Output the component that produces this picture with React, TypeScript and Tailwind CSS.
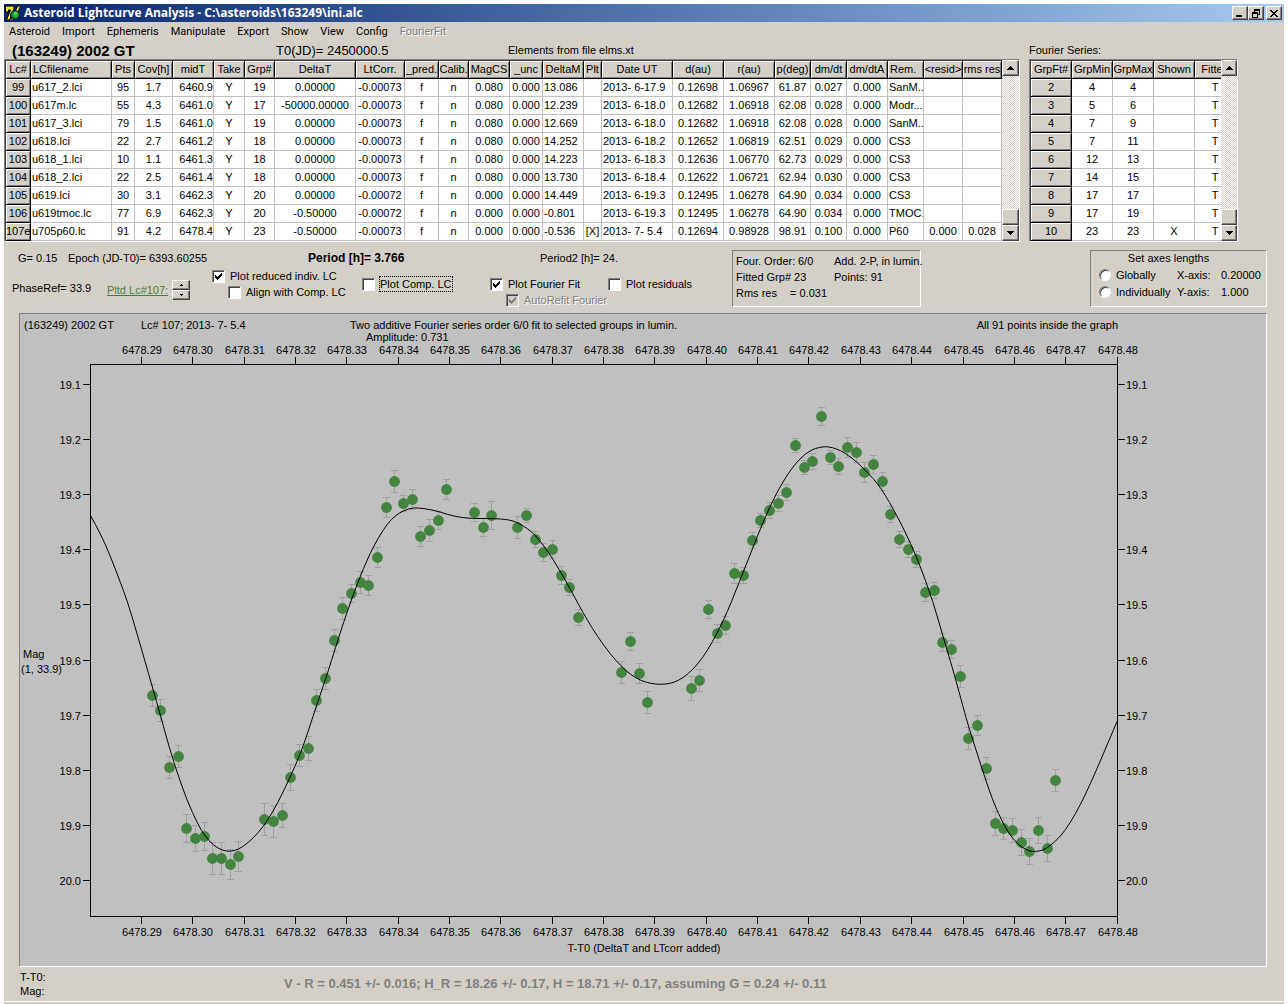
import React from 'react';
import clsx from 'clsx';

type Align = 'left' | 'center' | 'right';

interface Column {
    title: string;
    width: number;
    align?: Align;
}

const RAISED = 'border border-t-white border-l-white border-r-[#404040] border-b-[#404040] shadow-[inset_-1px_-1px_0_#808080]';
const SUNKEN = 'border border-t-[#808080] border-l-[#808080] border-r-white border-b-white';

const menuItems = ['Asteroid', 'Import', 'Ephemeris', 'Manipulate', 'Export', 'Show', 'View', 'Config'];

const lcColumns: Column[] = [
    { title: 'Lc#', width: 25 },
    { title: 'LCfilename', width: 81, align: 'left' },
    { title: 'Pts', width: 23 },
    { title: 'Cov[h]', width: 38 },
    { title: 'midT', width: 41, align: 'right' },
    { title: 'Take', width: 31 },
    { title: 'Grp#', width: 30 },
    { title: 'DeltaT', width: 81 },
    { title: 'LtCorr.', width: 49 },
    { title: '_pred.', width: 34 },
    { title: 'Calib.', width: 30 },
    { title: 'MagCS', width: 41 },
    { title: '_unc', width: 33 },
    { title: 'DeltaM', width: 41, align: 'left' },
    { title: 'Plt', width: 18 },
    { title: 'Date UT', width: 71, align: 'left' },
    { title: 'd(au)', width: 51 },
    { title: 'r(au)', width: 51 },
    { title: 'p(deg)', width: 36 },
    { title: 'dm/dt', width: 36 },
    { title: 'dm/dtA', width: 41 },
    { title: 'Rem.', width: 36, align: 'left' },
    { title: '<resid>', width: 39 },
    { title: 'rms res', width: 39 },
];

const lcRows: string[][] = [
    ['99', 'u617_2.lci', '95', '1.7', '6460.9', 'Y', '19', '0.00000', '-0.00073', 'f', 'n', '0.080', '0.000', '13.086', '', '2013- 6-17.9', '0.12698', '1.06967', '61.87', '0.027', '0.000', 'SanM..', '', ''],
    ['100', 'u617m.lc', '55', '4.3', '6461.0', 'Y', '17', '-50000.00000', '-0.00073', 'f', 'n', '0.080', '0.000', '12.239', '', '2013- 6-18.0', '0.12682', '1.06918', '62.08', '0.028', '0.000', 'Modr...', '', ''],
    ['101', 'u617_3.lci', '79', '1.5', '6461.0', 'Y', '19', '0.00000', '-0.00073', 'f', 'n', '0.080', '0.000', '12.669', '', '2013- 6-18.0', '0.12682', '1.06918', '62.08', '0.028', '0.000', 'SanM..', '', ''],
    ['102', 'u618.lci', '22', '2.7', '6461.2', 'Y', '18', '0.00000', '-0.00073', 'f', 'n', '0.080', '0.000', '14.252', '', '2013- 6-18.2', '0.12652', '1.06819', '62.51', '0.029', '0.000', 'CS3', '', ''],
    ['103', 'u618_1.lci', '10', '1.1', '6461.3', 'Y', '18', '0.00000', '-0.00073', 'f', 'n', '0.080', '0.000', '14.223', '', '2013- 6-18.3', '0.12636', '1.06770', '62.73', '0.029', '0.000', 'CS3', '', ''],
    ['104', 'u618_2.lci', '22', '2.5', '6461.4', 'Y', '18', '0.00000', '-0.00073', 'f', 'n', '0.080', '0.000', '13.730', '', '2013- 6-18.4', '0.12622', '1.06721', '62.94', '0.030', '0.000', 'CS3', '', ''],
    ['105', 'u619.lci', '30', '3.1', '6462.3', 'Y', '20', '0.00000', '-0.00072', 'f', 'n', '0.000', '0.000', '14.449', '', '2013- 6-19.3', '0.12495', '1.06278', '64.90', '0.034', '0.000', 'CS3', '', ''],
    ['106', 'u619tmoc.lc', '77', '6.9', '6462.3', 'Y', '20', '-0.50000', '-0.00072', 'f', 'n', '0.000', '0.000', '-0.801', '', '2013- 6-19.3', '0.12495', '1.06278', '64.90', '0.034', '0.000', 'TMOC.', '', ''],
    ['107e', 'u705p60.lc', '91', '4.2', '6478.4', 'Y', '23', '-0.50000', '-0.00073', 'f', 'n', '0.000', '0.000', '-0.536', '[X]', '2013- 7- 5.4', '0.12694', '0.98928', '98.91', '0.100', '0.000', 'P60', '0.000', '0.028'],
];

const fourierColumns: Column[] = [
    { title: 'GrpFt#', width: 41 },
    { title: 'GrpMin', width: 41 },
    { title: 'GrpMax', width: 41 },
    { title: 'Shown', width: 41 },
    { title: 'Fitted', width: 41 },
];

const fourierRows: string[][] = [
    ['2', '4', '4', '', 'T'],
    ['3', '5', '6', '', 'T'],
    ['4', '7', '9', '', 'T'],
    ['5', '7', '11', '', 'T'],
    ['6', '12', '13', '', 'T'],
    ['7', '14', '15', '', 'T'],
    ['8', '17', '17', '', 'T'],
    ['9', '17', '19', '', 'T'],
    ['10', '23', '23', 'X', 'T'],
];

// [x, y, half length of the error bar]
const points: [number, number, number][] = [
    [152, 695, 11], [160, 710, 11], [169, 767, 11], [178, 756, 11], [186, 828, 14], [195, 838, 13], [204, 836, 14],
    [212, 858, 16], [221, 858, 16], [230, 864, 15], [238, 856, 15], [264, 819, 16], [273, 821, 16], [282, 815, 12],
    [290, 777, 13], [299, 755, 11], [308, 748, 12], [316, 700, 11], [325, 678, 11], [334, 640, 11], [342, 608, 11],
    [351, 593, 9], [360, 582, 11], [368, 585, 10], [377, 557, 10], [386, 507, 10], [394, 481, 11], [403, 503, 8],
    [412, 499, 10], [420, 536, 10], [429, 530, 11], [438, 520, 9], [446, 489, 10], [474, 512, 9], [483, 527, 9],
    [491, 515, 14], [517, 527, 11], [526, 515, 7], [535, 539, 8], [543, 552, 9], [552, 549, 9], [561, 575, 9],
    [569, 587, 8], [578, 617, 8], [621, 672, 11], [630, 641, 9], [639, 673, 10], [647, 702, 11], [691, 688, 12],
    [699, 680, 11], [708, 609, 9], [717, 633, 9], [725, 625, 9], [734, 573, 10], [743, 575, 8], [752, 540, 8],
    [760, 520, 7], [769, 510, 8], [778, 503, 8], [786, 492, 8], [795, 445, 7], [804, 467, 7], [812, 461, 8],
    [821, 416, 9], [830, 457, 7], [838, 466, 8], [847, 447, 10], [856, 452, 10], [864, 472, 10], [873, 464, 9],
    [882, 481, 9], [890, 514, 8], [899, 539, 8], [908, 549, 8], [916, 559, 8], [925, 592, 9], [934, 590, 8],
    [942, 642, 9], [951, 649, 9], [960, 676, 11], [968, 738, 11], [977, 725, 10], [986, 768, 11], [995, 823, 12],
    [1003, 828, 11], [1012, 830, 12], [1021, 842, 13], [1029, 851, 13], [1038, 830, 13], [1047, 848, 13], [1055, 780, 11],
];

const fit: [number, number][] = [
    [90, 515], [100, 533], [110, 556], [118, 577], [127, 601], [135, 628], [144, 659], [152, 687], [160, 715], [169, 748],
    [178, 776], [187, 801], [197, 823], [204, 835], [213, 845], [222, 850], [230, 851], [238, 849], [248, 842], [258, 832],
    [267, 820], [277, 803], [290, 776], [300, 753], [308, 730], [317, 702], [327, 673], [335, 647], [343, 622], [351, 599],
    [357, 583], [363, 568], [370, 552], [378, 537], [387, 523], [395, 515], [403, 510], [413, 507], [423, 508], [435, 510],
    [447, 514], [460, 517], [473, 518], [492, 518], [508, 519], [517, 522], [527, 528], [535, 535], [543, 545], [552, 558],
    [561, 573], [570, 589], [578, 604], [587, 620], [597, 636], [610, 654], [622, 667], [630, 674], [640, 680], [650, 683],
    [660, 684], [670, 683], [678, 680], [687, 674], [697, 664], [707, 650], [717, 632], [727, 611], [735, 591], [743, 571],
    [752, 548], [760, 528], [769, 507], [778, 489], [787, 474], [795, 463], [804, 454], [812, 449], [818, 447], [825, 446],
    [832, 447], [840, 450], [848, 455], [857, 462], [868, 473], [877, 483], [885, 495], [893, 509], [902, 526], [910, 543],
    [917, 559], [925, 580], [932, 600], [940, 627], [949, 658], [953, 671], [963, 708], [968, 726], [977, 754], [985, 779],
    [993, 802], [1003, 824], [1012, 838], [1021, 847], [1030, 851], [1035, 851], [1042, 850], [1050, 845], [1060, 836],
    [1070, 822], [1080, 804], [1090, 783], [1100, 760], [1108, 741], [1117, 720],
];

// quadratic segments through the midpoints keep the curve smooth
const fitPath = () => {
    let d = `M${fit[0][0]} ${fit[0][1]}`;
    for (let i = 1; i < fit.length - 1; i++) {
        const [x, y] = fit[i];
        const [nx, ny] = fit[i + 1];
        d += ` Q${x} ${y} ${(x + nx) / 2} ${(y + ny) / 2}`;
    }
    const [lx, ly] = fit[fit.length - 1];
    return `${d} L${lx} ${ly}`;
};

const xTicks = Array.from({ length: 20 }, (_, i) => ({
    pos: Math.floor(90.06 + 51.35 * (i + 1)),
    label: (6478.29 + i * 0.01).toFixed(2),
}));

const yTicks = Array.from({ length: 10 }, (_, i) => ({
    pos: Math.floor(384.3 + 55.15 * i),
    label: (19.1 + i * 0.1).toFixed(1),
}));

const Logo = () => (
    <svg width="18" height="18" viewBox="0 0 18 18" aria-hidden="true">
        <path d="M1.500 2H10v3L5.500 16H2.500L6.500 6H4.500v2h-3z" fill="#f5e418" stroke="#000" />
        <path d="M10 9l4-7h2.500l-3 7z" fill="#f5e418" stroke="#000" strokeWidth=".8" />
        <circle cx="11" cy="11" r="4.500" fill="#0c6b5c" stroke="#000" strokeWidth=".8" />
        <circle cx="11.500" cy="10.500" r="3" fill="#27b324" />
        <path d="M10.500 8.500h2v2h-2z" fill="#7ee26b" />
        <path d="M6 15l3 1" stroke="#d93a2b" />
    </svg>
);

const TitleButton = ({ label, children }: { label: string; children: React.ReactNode }) => (
    <button type="button" aria-label={label} className={clsx('flex h-[14px] w-4 items-center justify-center bg-[#d4d0c8]', RAISED)}>
        <svg width="10" height="9" viewBox="0 0 10 9" shapeRendering="crispEdges" fill="#000">{children}</svg>
    </button>
);

const TitleBar = () => (
    <header className="flex h-[18px] items-center bg-linear-to-r from-[#0a246a] to-[#a6caf0] pr-[2px]">
        <Logo />
        <h1 className="ml-[2px] flex-1 font-[Open_Sans,sans-serif] text-xs leading-[18px] font-bold text-white">
            Asteroid Lightcurve Analysis - C:\asteroids\163249\ini.alc
        </h1>
        <TitleButton label="Minimize"><path d="M1 6h6v2H1z" /></TitleButton>
        <TitleButton label="Restore"><path d="M3 0h6v6H7V5h1V2H4v1H3zM1 3h6v6H1zM2 5v3h4V5z" fillRule="evenodd" /></TitleButton>
        <span className="w-[2px]" />
        <TitleButton label="Close"><path d="M1 1h2v1h1v1h2V2h1V1h2v1H8v1H7v1H6v1h1v1h1v1h1v1H7V7H6V6H4v1H3v1H1V7h1V6h1V5h1V4H3V3H2V2H1z" /></TitleButton>
    </header>
);

const ScrollBar = ({ width }: { width: number }) => (
    <div className="flex flex-col bg-[conic-gradient(#fff_25%,#d4d0c8_0_50%,#fff_0_75%,#d4d0c8_0)] bg-[length:2px_2px]" style={{ width }}>
        <button type="button" aria-label="Scroll up" className={clsx('flex h-4 items-center justify-center bg-[#d4d0c8]', RAISED)}>
            <svg width="7" height="4" viewBox="0 0 7 4" shapeRendering="crispEdges"><path d="M3 0h1v1h1v1h1v1h1v1H0V3h1V2h1V1h1z" /></svg>
        </button>
        <div className="flex-1" />
        <div className={clsx('h-4 bg-[#d4d0c8]', RAISED)} />
        <button type="button" aria-label="Scroll down" className={clsx('flex h-4 items-center justify-center bg-[#d4d0c8]', RAISED)}>
            <svg width="7" height="4" viewBox="0 0 7 4" shapeRendering="crispEdges"><path d="M0 0h7v1H6v1H5v1H4v1H3V3H2V2H1V1H0z" /></svg>
        </button>
    </div>
);

const DataGrid = ({ columns, rows, label }: { columns: Column[]; rows: string[][]; label: string }) => {
    const total = columns.reduce((sum, col) => sum + col.width, 0);
    const fixed = 'overflow-hidden border-r border-b border-black bg-[#d4d0c8] p-0 font-normal whitespace-nowrap shadow-[inset_1px_1px_0_#fff,inset_-1px_-1px_0_#808080]';

    return (
        <table aria-label={label} className="table-fixed border-separate border-spacing-0 bg-white leading-[17px]" style={{ width: total }}>
            <colgroup>
                {columns.map(col => <col key={col.title} style={{ width: col.width }} />)}
            </colgroup>
            <thead>
                <tr className="h-[18px]">
                    {columns.map(col => (
                        <th key={col.title} scope="col" className={clsx(fixed, col.title === 'LCfilename' || col.title === 'Rem.' ? 'pl-[2px] text-left' : 'text-center')}>
                            {col.title}
                        </th>
                    ))}
                </tr>
            </thead>
            <tbody>
                {rows.map(row => (
                    <tr key={row[0]} className="h-[18px]">
                        {row.map((cell, i) => i === 0 ? (
                            <th key={i} scope="row" className={clsx(fixed, 'text-center')}>{cell}</th>
                        ) : (
                            <td
                                key={i}
                                className={clsx(
                                    'overflow-hidden border-r border-b border-[#c0c0c0] whitespace-nowrap',
                                    columns[i].align === 'left' && 'pl-px text-left',
                                    columns[i].align === 'right' && 'text-right',
                                    !columns[i].align && 'text-center',
                                )}
                            >
                                {cell}
                            </td>
                        ))}
                    </tr>
                ))}
            </tbody>
        </table>
    );
};

interface CheckProps {
    label: string;
    checked?: boolean;
    disabled?: boolean;
    focused?: boolean;
}

const Check = ({ label, checked, disabled, focused }: CheckProps) => (
    <label className="flex h-4 items-center gap-[5px] whitespace-nowrap">
        <span className="grid shrink-0 items-center justify-items-center">
            <input
                type="checkbox"
                defaultChecked={checked}
                disabled={disabled}
                className={clsx('peer col-start-1 row-start-1 size-[13px] appearance-none shadow-[inset_1px_1px_0_#404040]', SUNKEN, disabled ? 'bg-[#d4d0c8]' : 'bg-white')}
            />
            <svg width="7" height="7" viewBox="0 0 7 7" shapeRendering="crispEdges" className="invisible col-start-1 row-start-1 peer-checked:visible" fill={disabled ? '#808080' : '#000'}>
                <path d="M0 2h1v1h1v1h1V3h1V2h1V1h1V0h1v3H6v1H5v1H4v1H3v1H2V6H1V5H0z" />
            </svg>
        </span>
        <span className={clsx('leading-[14px]', focused && 'outline-1 outline-dotted outline-black', disabled && 'text-[#808080] [text-shadow:1px_1px_0_#fff]')}>
            {label}
        </span>
    </label>
);

const Toolbar = () => (
    <section className="flex h-[71px] pt-2 leading-4">
        <div className="w-[728px] shrink-0">
            <div className="flex pl-[14px]">
                <span className="w-[50px]">G= 0.15</span>
                <span className="w-[240px]">Epoch (JD-T0)= 6393.60255</span>
                <b className="w-[232px] text-xs leading-4">Period [h]= 3.766</b>
                <span>Period2 [h]= 24.</span>
            </div>
            <div className="flex pt-[2px]">
                <div className="flex w-[208px] items-center gap-[3px] pl-2">
                    <span className="w-[92px]">PhaseRef= 33.9</span>
                    <a href="#lc107" className="w-[62px] pt-1 whitespace-nowrap text-[#44803c] underline">Pltd Lc#107:</a>
                    <span className="flex flex-col pt-1">
                        <button type="button" aria-label="Next lightcurve" className={clsx('flex h-[10px] w-[18px] items-center justify-center', RAISED)}>
                            <svg width="3" height="2" shapeRendering="crispEdges"><path d="M1 0h1v1h1v1H0V1h1z" /></svg>
                        </button>
                        <button type="button" aria-label="Previous lightcurve" className={clsx('flex h-[10px] w-[18px] items-center justify-center', RAISED)}>
                            <svg width="3" height="2" shapeRendering="crispEdges"><path d="M0 0h3v1H2v1H1V1H0z" /></svg>
                        </button>
                    </span>
                </div>
                <div className="w-[150px]">
                    <Check label="Plot reduced indiv. LC" checked />
                    <div className="pl-4"><Check label="Align with Comp. LC" /></div>
                </div>
                <div className="w-[128px] pt-2">
                    <Check label="Plot Comp. LC" focused />
                </div>
                <div className="w-[118px] pt-2">
                    <Check label="Plot Fourier Fit" checked />
                    <div className="pl-4"><Check label="AutoRefit Fourier" checked disabled /></div>
                </div>
                <div className="pt-2">
                    <Check label="Plot residuals" />
                </div>
            </div>
        </div>

        <dl className={clsx('grid h-[57px] w-[189px] shrink-0 grid-cols-[62px_36px_auto] content-start pt-[2px] pl-[3px] whitespace-nowrap', SUNKEN)}>
            <dt>Four. Order:</dt><dd>6/0</dd><dd>Add. 2-P, in lumin.</dd>
            <dt className="col-span-2">Fitted Grp# 23</dt><dd>Points: 91</dd>
            <dt className="w-[54px]">Rms res</dt><dd className="col-span-2 -ml-2">= 0.031</dd>
        </dl>

        <fieldset className={clsx('mr-[17px] ml-auto h-[57px] w-[177px] shrink-0', SUNKEN)}>
            <div className="pr-5 text-center leading-[15px]">Set axes lengths</div>
            {[['Globally', 'X-axis:', '0.20000'], ['Individually', 'Y-axis:', '1.000']].map(([mode, axis, value]) => (
                <div key={mode} className="flex h-[17px] items-center pl-2">
                    <label className="flex w-[78px] items-center gap-[5px]">
                        <input type="radio" name="axes" className="size-3 appearance-none rounded-full border border-t-[#808080] border-r-white border-b-white border-l-[#808080] bg-white shadow-[inset_1px_1px_0_#404040]" />
                        {mode}
                    </label>
                    <span className="w-11">{axis}</span>
                    <span>{value}</span>
                </div>
            ))}
        </fieldset>
    </section>
);

const LightcurveChart = () => (
    <section className={clsx('mr-[17px] ml-[15px] bg-[#c0c0c0]', SUNKEN)}>
        <svg viewBox="20 314 1246 652" className="block w-full" fontSize="11" role="img" aria-label="Lightcurve 107">
            <text x="24" y="329">(163249) 2002 GT</text>
            <text x="141" y="329">Lc# 107; 2013- 7- 5.4</text>
            <text x="350" y="329">Two additive Fourier series order 6/0 fit to selected groups in lumin.</text>
            <text x="366" y="341">Amplitude: 0.731</text>
            <text x="1118" y="329" textAnchor="end">All 91 points inside the graph</text>
            <text x="23" y="658">Mag</text>
            <text x="21" y="673">(1, 33.9)</text>
            <text x="644" y="952" textAnchor="middle">T-T0 (DeltaT and LTcorr added)</text>

            <g stroke="#000" fill="none" shapeRendering="crispEdges">
                <rect x="90.500" y="364.500" width="1027" height="552" />
                {xTicks.map(({ pos }) => (
                    <path key={pos} d={`M${pos + 0.5} 357V364M${pos + 0.5} 917V924`} />
                ))}
                {yTicks.map(({ pos }) => (
                    <path key={pos} d={`M83 ${pos + 0.5}H90M1118 ${pos + 0.5}H1125`} />
                ))}
            </g>

            {xTicks.map(({ pos, label }) => (
                <g key={label} textAnchor="middle">
                    <text x={pos + 1} y="354">{label}</text>
                    <text x={pos + 1} y="936">{label}</text>
                </g>
            ))}
            {yTicks.map(({ pos, label }) => (
                <g key={label}>
                    <text x="81" y={pos + 5} textAnchor="end">{label}</text>
                    <text x="1126" y={pos + 5}>{label}</text>
                </g>
            ))}

            {points.map(([x, y, e]) => (
                <g key={x}>
                    <path
                        d={`M${x + 0.5} ${y - e}V${y + e + 1}M${x - 3} ${y - e + 0.5}h7M${x - 3} ${y + e + 0.5}h7`}
                        stroke="#a0a0a0"
                        shapeRendering="crispEdges"
                    />
                    <circle cx={x + 0.5} cy={y + 0.5} r="5.400" fill="#448440" />
                </g>
            ))}
            <path d={fitPath()} transform="translate(0.5 0.5)" fill="none" stroke="#000" />
        </svg>
    </section>
);

const App: React.FC = () => (
    <div className="flex min-h-screen flex-col bg-white px-1 pt-1 font-[Liberation_Sans,Arial,sans-serif] text-[11px] text-black">
        <TitleBar />
        <main className="flex flex-1 flex-col bg-[#d4d0c8]">
            <nav className="flex h-5 items-center gap-3 pl-[5px] font-[Roboto,sans-serif]">
                {menuItems.map(item => <button key={item} type="button">{item}</button>)}
                <button type="button" disabled className="text-[#808080] [text-shadow:1px_1px_0_#fff]">FourierFit</button>
            </nav>

            <div className="flex gap-[9px]">
                <div>
                    <div className="flex h-[17px] items-center pl-2">
                        <h2 className="w-[264px] text-[15px] leading-4 font-bold">(163249) 2002 GT</h2>
                        <span className="w-[232px] text-[13px] leading-4">T0(JD)= 2450000.5</span>
                        <span>Elements from file elms.xt</span>
                    </div>
                    <div className={clsx('flex', SUNKEN)}>
                        <div className="border-t border-l border-[#404040]">
                            <DataGrid columns={lcColumns} rows={lcRows} label="Lightcurves" />
                        </div>
                        <ScrollBar width={17} />
                    </div>
                </div>
                <div className="w-[209px]">
                    <div className="flex h-[17px] items-center">Fourier Series:</div>
                    <div className={clsx('flex', SUNKEN)}>
                        <div className="flex-1 overflow-hidden border-t border-l border-[#404040]">
                            <DataGrid columns={fourierColumns} rows={fourierRows} label="Fourier Series" />
                        </div>
                        <ScrollBar width={16} />
                    </div>
                </div>
            </div>

            <Toolbar />
            <LightcurveChart />

            <footer className="flex flex-1 border-b border-white pl-4">
                <div className="w-[264px] pt-[3px] leading-[14px]">
                    <div>T-T0:</div>
                    <div>Mag:</div>
                </div>
                <p className="pt-2 text-[13px] leading-[18px] font-bold text-[#808080]">
                    V - R = 0.451 +/- 0.016; H_R = 18.26 +/- 0.17, H = 18.71 +/- 0.17, assuming G = 0.24 +/- 0.11
                </p>
            </footer>
            <div className="h-[2px]" />
        </main>
    </div>
);

export default App;
